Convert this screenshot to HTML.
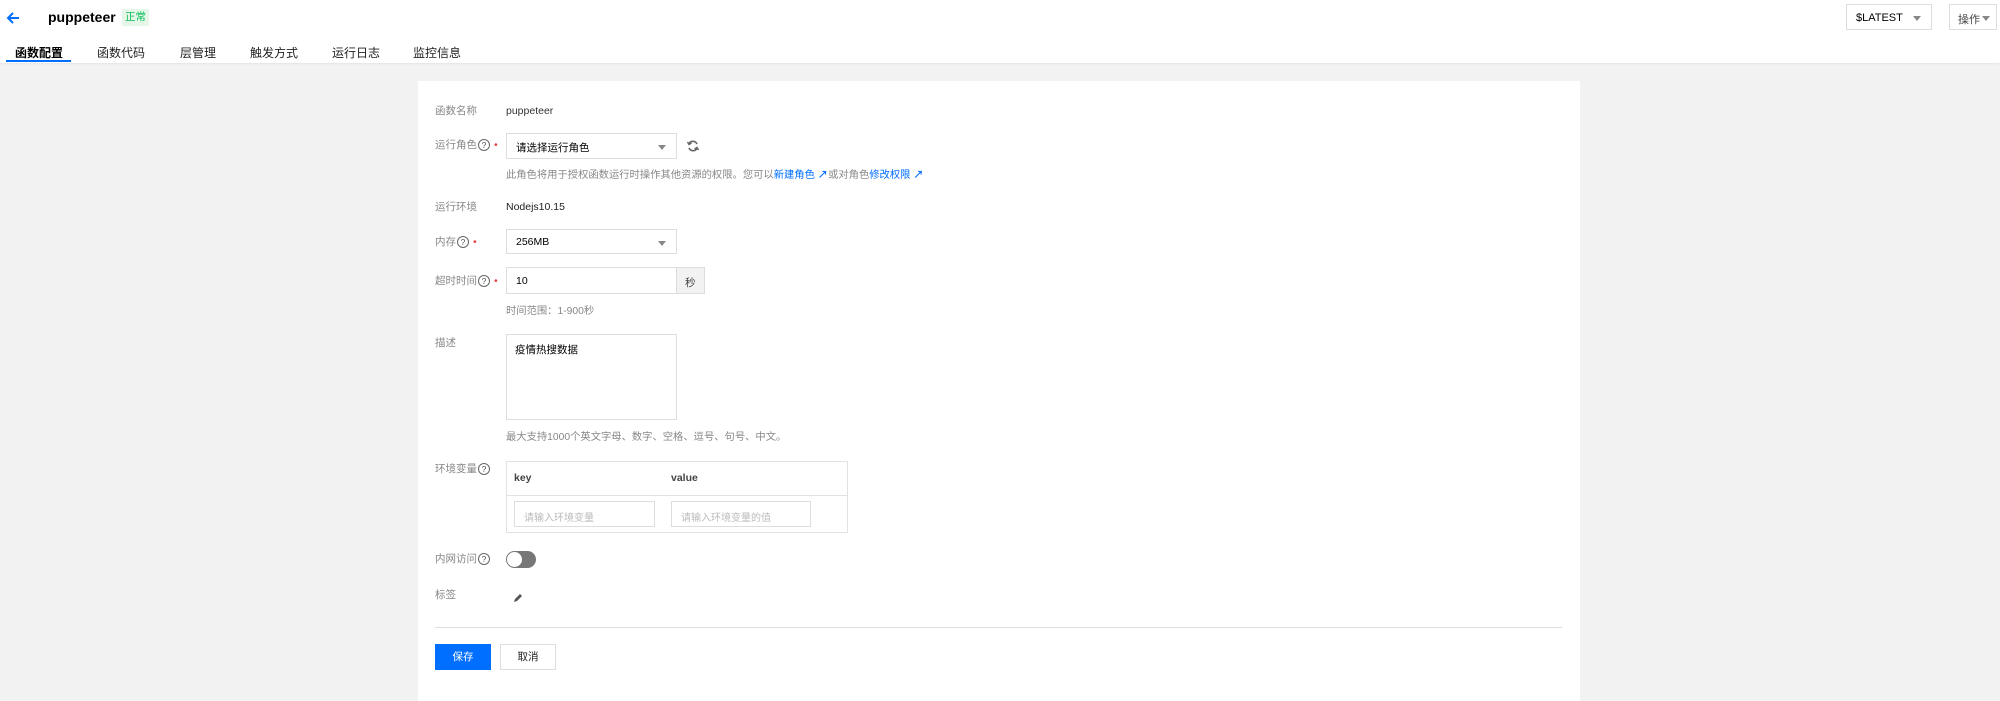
<!DOCTYPE html>
<html><head><meta charset="utf-8"><style>
*{box-sizing:border-box;margin:0;padding:0}
body{width:2000px;height:681px;overflow:hidden;background:#f2f2f2;font-family:"Liberation Sans","Noto Sans CJK SC",sans-serif;font-size:10.5px;color:#000;position:relative}
.a{position:absolute;white-space:nowrap}
.lbl{position:absolute;left:435px;color:#888;font-size:10.5px;white-space:nowrap;line-height:14px}
.q{display:inline-block;width:12px;height:12px;border:1.2px solid #666;border-radius:50%;font-size:8.5px;line-height:10px;text-align:center;color:#555;vertical-align:top;margin-left:1px;margin-top:1px}
.st{color:#e54545;margin-left:4px}
.box{position:absolute;border:1px solid #ddd;background:#fff;white-space:nowrap}
.caret{position:absolute;right:10px;top:11px;width:0;height:0;border-left:4px solid transparent;border-right:4px solid transparent;border-top:5px solid #888}
.hint{position:absolute;left:506px;color:#888;font-size:10.3px;white-space:nowrap}
.tab{position:absolute;top:44px;font-size:12px;color:#222}
</style></head><body>
<div class="a" style="left:0;top:0;width:2000px;height:63px;background:#fff;box-shadow:0 1px 2px rgba(0,0,0,.06)"></div>
<svg class="a" style="left:5px;top:10px" width="16" height="16" viewBox="0 0 16 16"><path d="M14 8H3M8 3L3 8l5 5" stroke="#006eff" stroke-width="2" fill="none"/></svg>
<div class="a" style="left:48px;top:9px;font-size:14px;font-weight:bold">puppeteer</div>
<div class="a" style="left:122px;top:9px;height:17px;padding:0 3px;background:#e6f7ea;color:#0abf5b;font-size:10.5px;line-height:17px">正常</div>
<div class="tab" style="left:15px;font-weight:bold;color:#000">函数配置</div>
<div class="a" style="left:6px;top:60px;width:65px;height:2px;background:#006eff"></div>
<div class="tab" style="left:97px">函数代码</div>
<div class="tab" style="left:180px">层管理</div>
<div class="tab" style="left:250px">触发方式</div>
<div class="tab" style="left:332px">运行日志</div>
<div class="tab" style="left:413px">监控信息</div>
<div class="box" style="left:1846px;top:4px;width:86px;height:26px"><span class="a" style="left:9px;top:7px;font-size:11px">$LATEST</span><div class="caret" style="top:11px"></div></div>
<div class="box" style="left:1949px;top:4px;width:48px;height:26px"><span class="a" style="left:8px;top:6px;font-size:11px;color:#444">操作</span><div class="caret" style="right:6px"></div></div>

<div class="a" style="left:418px;top:81px;width:1162px;height:620px;background:#fff"></div>
<div class="lbl" style="top:104px">函数名称</div><div class="a" style="left:506px;top:105px;color:#333">puppeteer</div>
<div class="lbl" style="top:138px">运行角色<span class="q">?</span><span class="st">•</span></div>
<div class="box" style="left:506px;top:133px;width:171px;height:26px"><span class="a" style="left:9px;top:6px">请选择运行角色</span><div class="caret"></div></div>
<svg class="a" style="left:686px;top:139px" width="14" height="14" viewBox="0 0 14 14"><path d="M11 5A4.5 4.5 0 0 0 3 4.5M3 9a4.5 4.5 0 0 0 8 .5" stroke="#666" stroke-width="1.6" fill="none"/><path d="M1.5 3l1.5 2.5 2.5-1.5M12.5 11l-1.5-2.5-2.5 1.5" stroke="#666" stroke-width="1.4" fill="none"/></svg>
<div class="hint" style="top:166px">此角色将用于授权函数运行时操作其他资源的权限。您可以<span style="color:#006eff">新建角色 <b>↗</b></span>或对角色<span style="color:#006eff">修改权限 <b>↗</b></span></div>
<div class="lbl" style="top:200px">运行环境</div><div class="a" style="left:506px;top:201px;color:#222">Nodejs10.15</div>
<div class="lbl" style="top:235px">内存<span class="q">?</span><span class="st">•</span></div>
<div class="box" style="left:506px;top:229px;width:171px;height:25px"><span class="a" style="left:9px;top:6px">256MB</span><div class="caret"></div></div>
<div class="lbl" style="top:274px">超时时间<span class="q">?</span><span class="st">•</span></div>
<div class="box" style="left:506px;top:267px;width:171px;height:27px"><span class="a" style="left:9px;top:7px">10</span></div>
<div class="box" style="left:676px;top:267px;width:29px;height:27px;background:#f2f2f2"><span class="a" style="left:8px;top:7px;color:#444;font-size:10.5px">秒</span></div>
<div class="hint" style="top:302px">时间范围：1-900秒</div>
<div class="lbl" style="top:336px">描述</div>
<div class="box" style="left:506px;top:334px;width:171px;height:86px"><span class="a" style="left:8px;top:7px;font-size:10.5px">疫情热搜数据</span></div>
<div class="hint" style="top:428px">最大支持1000个英文字母、数字、空格、逗号、句号、中文。</div>
<div class="lbl" style="top:462px">环境变量<span class="q">?</span></div>
<div class="box" style="left:506px;top:461px;width:342px;height:72px;border-color:#e2e2e2"></div>
<div class="a" style="left:507px;top:495px;width:340px;height:1px;background:#e2e2e2"></div>
<div class="a" style="left:514px;top:472px;font-weight:bold;color:#444;font-size:10.5px">key</div>
<div class="a" style="left:671px;top:472px;font-weight:bold;color:#444;font-size:10.5px">value</div>
<div class="box" style="left:514px;top:501px;width:141px;height:26px"><span class="a" style="left:9px;top:7px;color:#bbb;font-size:10px">请输入环境变量</span></div>
<div class="box" style="left:671px;top:501px;width:140px;height:26px"><span class="a" style="left:9px;top:7px;color:#bbb;font-size:10px">请输入环境变量的值</span></div>
<div class="lbl" style="top:552px">内网访问<span class="q">?</span></div>
<div class="a" style="left:506px;top:551px;width:30px;height:17px;border-radius:9px;background:#777"><div class="a" style="left:1px;top:1px;width:15px;height:15px;border-radius:50%;background:#fff"></div></div>
<div class="lbl" style="top:588px">标签</div>
<svg class="a" style="left:512px;top:592px" width="12" height="12" viewBox="0 0 12 12"><path d="M2 10l1-3 5-5 2 2-5 5z" fill="#555"/></svg>
<div class="a" style="left:435px;top:627px;width:1127px;height:1px;background:#ddd"></div>
<div class="a" style="left:435px;top:644px;width:56px;height:26px;background:#006eff;color:#fff;text-align:center;line-height:26px">保存</div>
<div class="box" style="left:500px;top:644px;width:56px;height:26px;text-align:center;line-height:24px;color:#222">取消</div>
</body></html>
